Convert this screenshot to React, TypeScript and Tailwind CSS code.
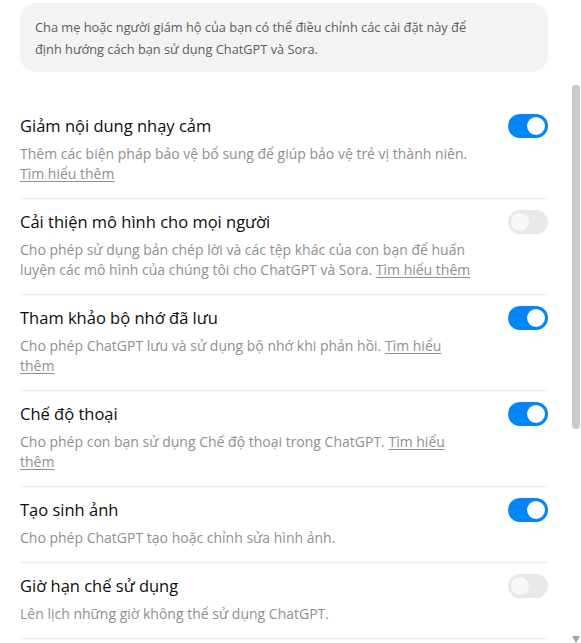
type Setting = {
  title: string;
  desc: string;
  link?: boolean;
  on: boolean;
};

const settings: Setting[] = [
  {
    title: "Giảm nội dung nhạy cảm",
    desc: "Thêm các biện pháp bảo vệ bổ sung để giúp bảo vệ trẻ vị thành niên.",
    link: true,
    on: true,
  },
  {
    title: "Cải thiện mô hình cho mọi người",
    desc: "Cho phép sử dụng bản chép lời và các tệp khác của con bạn để huấn luyện các mô hình của chúng tôi cho ChatGPT và Sora.",
    link: true,
    on: false,
  },
  {
    title: "Tham khảo bộ nhớ đã lưu",
    desc: "Cho phép ChatGPT lưu và sử dụng bộ nhớ khi phản hồi.",
    link: true,
    on: true,
  },
  {
    title: "Chế độ thoại",
    desc: "Cho phép con bạn sử dụng Chế độ thoại trong ChatGPT.",
    link: true,
    on: true,
  },
  {
    title: "Tạo sinh ảnh",
    desc: "Cho phép ChatGPT tạo hoặc chỉnh sửa hình ảnh.",
    on: true,
  },
  {
    title: "Giờ hạn chế sử dụng",
    desc: "Lên lịch những giờ không thể sử dụng ChatGPT.",
    on: false,
  },
];

function Toggle({ on }: { on: boolean }) {
  return (
    <div
      className={
        on
          ? "flex h-6 w-10 shrink-0 items-center justify-end rounded-full bg-[#0285ff] px-[3px]"
          : "flex h-6 w-10 shrink-0 items-center justify-start rounded-full bg-[#e8e8e8] px-[3px]"
      }
    >
      <div
        className={
          on
            ? "h-[18px] w-[18px] rounded-full bg-white"
            : "h-[18px] w-[18px] rounded-full bg-[#f7f7f7]"
        }
      />
    </div>
  );
}

export default function App() {
  return (
    <div
      className="relative h-[643px] w-[581px] overflow-hidden bg-white"
      style={{ fontFamily: '"Open Sans", "Noto Sans", sans-serif' }}
    >
      <div className="ml-5 mr-[33px] pt-[3px]">
        {/* notice box */}
        <div className="rounded-2xl bg-[#f3f3f3] px-[15px] pt-[13px] pb-[12px] text-[12.8px] leading-[22px] text-[#5d5d5d]">
          Cha mẹ hoặc người giám hộ của bạn có thể điều chỉnh các cài đặt này để
          <br />
          định hướng cách bạn sử dụng ChatGPT và Sora.
        </div>

        <div className="mt-[31px] border-b border-[#ececec]">
          {settings.map((s, i) => (
            <div
              key={s.title}
              className={
                i === 0
                  ? "flex justify-between gap-7 pt-[11px] pb-[14px]"
                  : "flex justify-between gap-7 border-t border-[#ececec] pt-[11px] pb-[14px]"
              }
            >
              <div className="min-w-0 max-w-[459px] flex-1">
                <div className="text-[16.5px] leading-6 text-[#0d0d0d]">{s.title}</div>
                <div className="mt-[6px] text-[14px] leading-5 text-[#8f8f8f]">
                  {s.desc}
                  {s.link && (
                    <>
                      {" "}
                      <span className="underline underline-offset-2">Tìm hiểu thêm</span>
                    </>
                  )}
                </div>
              </div>
              <Toggle on={s.on} />
            </div>
          ))}
        </div>
      </div>

      {/* scrollbar overlay */}
      <div className="absolute top-[85px] right-[1px] h-[344px] w-[8px] rounded-full bg-[#c9c9c9]" />
      <div className="absolute right-[1px] bottom-0 h-0 w-0 border-x-[4px] border-t-[7px] border-x-transparent border-t-[#a3a3a3]" />
    </div>
  );
}
